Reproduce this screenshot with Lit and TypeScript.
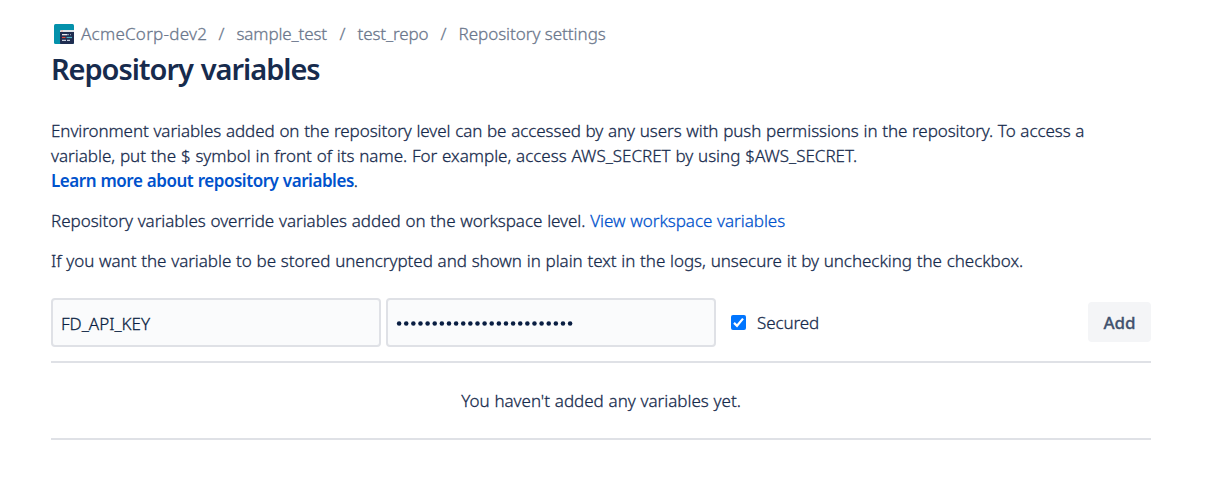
import { LitElement, html, css, svg } from "lit";
import { customElement } from "lit/decorators.js";

const projectIcon = html`<svg class="avatar" width="20" height="20" viewBox="0 0 20 20">
  ${svg`<rect width="20" height="20" rx="1.500" fill="#0491ab"/>
  <path d="M6 7h14v11.500a1.500 1.500 0 0 1-1.500 1.500H7a1 1 0 0 1-1-1z" fill="#1f2d50"/>
  <path d="M6 7a1 1 0 0 1 1-1h13v2H6z" fill="#dfe3e8"/>
  <path d="M7 7h2" stroke="#f0a898" stroke-width="1"/>
  <path d="M8 10.700h5" stroke="#fff" stroke-width="1.200"/>
  <path d="M13 10.700h2M16 10.700h1" stroke="#8c98b3" stroke-width="1.200"/>
  <path d="M8 13.500h3.500" stroke="#e5493a" stroke-width="1.200"/>
  <path d="M12.500 13.500h5.500" stroke="#4fb3c6" stroke-width="1.200"/>
  <path d="M8 16.400h4M13 16.400h3" stroke="#c4ccdb" stroke-width="1.200"/>`}
</svg>`;

@customElement("app-root")
export class AppRoot extends LitElement {
  static styles = css`
    :host {
      display: block;
      box-sizing: border-box;
      width: 1213px;
      height: 477px;
      padding: 21px 62px 0 51px;
      overflow: hidden;
      background: #fff;
      color: #172b4d;
      font: 300 17px/25px "Noto Sans", "Open Sans", sans-serif;
      -webkit-text-stroke: 0.28px currentColor;
    }
    * { box-sizing: border-box; }
    a { color: #0052cc; text-decoration: none; -webkit-text-stroke-color: #0052cc; }
    .crumbs { display: flex; align-items: center; height: 25px; padding-left: 3px; color: #6b778c; -webkit-text-stroke-color: #6b778c; white-space: nowrap; }
    .crumbs span { flex: none; }
    .avatar { display: block; flex: none; margin-right: 7px; }
    .c1 { width: 125.5px; letter-spacing: 0.25px; }
    .c2 { width: 91px; letter-spacing: -0.12px; }
    .c3 { width: 71px; letter-spacing: -0.12px; }
    .c4 { letter-spacing: -0.03px; }
    .crumbs .sep { width: 30px; text-align: center; }
    h1 { margin: 5px 0 0; font-size: 29px; line-height: 35px; font-weight: 600; letter-spacing: -1.05px; word-spacing: 1.5px; white-space: nowrap; -webkit-text-stroke: 0; }
    .copy { padding-top: 32px; white-space: nowrap; word-spacing: 0.4px; }
    p { margin: 0 0 15px; }
    .line { display: block; height: 25px; }
    .l1 { letter-spacing: -0.07px; }
    .l2 { letter-spacing: -0.01px; }
    .l3 { letter-spacing: -0.46px; }
    .l4 { letter-spacing: -0.035px; }
    .l5 { letter-spacing: -0.037px; }
    .l3 a { font-weight: 600; -webkit-text-stroke: 0; }
    .form { display: flex; align-items: center; height: 49px; margin-top: 25px; }
    input.field {
      width: 330px; height: 49px; margin: 0 5px 0 0; padding: 2px 8px 0;
      border: 2px solid #dfe1e6; border-radius: 4px; background: #fafbfc;
      color: #091e42; font: inherit; letter-spacing: 0; outline: none;
      -webkit-text-stroke: 0.28px #091e42;
    }
    .dots { display: flex; align-items: center; width: 330px; height: 49px; padding: 2px 8px 0; border: 2px solid #dfe1e6; border-radius: 4px; background: #fafbfc; }
    .check { display: block; width: 15px; height: 15px; margin: 0 11px 1px 15px; }
    .secured { letter-spacing: -0.1px; }
    button { width: 63px; height: 40px; margin: 0 0 1px auto; padding: 0; border: 0; border-radius: 4px; background: #f4f5f7; color: #42526e; font: inherit; font-weight: 500; }
    .empty { display: flex; justify-content: center; align-items: center; height: 79px; margin-top: 14px; border: solid #dfe1e6; border-width: 2px 0; letter-spacing: -0.016px; word-spacing: 0.4px; }
  `;

  render() {
    return html`
      <nav class="crumbs">
        ${projectIcon}
        <span class="c1">AcmeCorp-dev2</span><span class="sep">/</span>
        <span class="c2">sample_test</span><span class="sep">/</span>
        <span class="c3">test_repo</span><span class="sep">/</span>
        <span class="c4">Repository settings</span>
      </nav>
      <h1>Repository variables</h1>
      <section class="copy">
        <p>
          <span class="line l1">Environment variables added on the repository level can be accessed by any users with push permissions in the repository. To access a</span>
          <span class="line l2">variable, put the $ symbol in front of its name. For example, access AWS_SECRET by using $AWS_SECRET.</span>
          <span class="line l3"><a>Learn more about repository variables</a>.</span>
        </p>
        <p class="l4">Repository variables override variables added on the workspace level. <a>View workspace variables</a></p>
        <p class="l5">If you want the variable to be stored unencrypted and shown in plain text in the logs, unsecure it by unchecking the checkbox.</p>
      </section>
      <div class="form">
        <input class="field" .value=${"FD_API_KEY"} />
        <div class="dots">
          <svg width="180" height="7" fill="#091e42">
            ${Array.from({ length: 25 }, (_, i) => svg`<circle cx=${3.1 + i * 7.125} cy="3.500" r="2.250" />`)}
          </svg>
        </div>
        <svg class="check" viewBox="0 0 15 15">
          <rect width="15" height="15" rx="2" fill="#0075ff" />
          <path d="M3 7.900 6 10.800 12 3.600" fill="none" stroke="#fff" stroke-width="2.200" />
        </svg>
        <span class="secured">Secured</span>
        <button>Add</button>
      </div>
      <div class="empty"><span>You haven't added any variables yet.</span></div>
    `;
  }
}
